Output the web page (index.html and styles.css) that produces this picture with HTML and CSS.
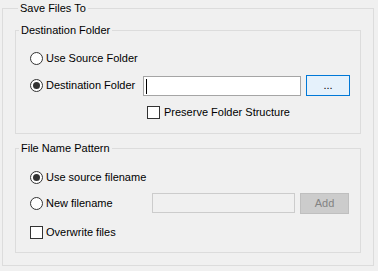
FILE: index.html
```html
<!DOCTYPE html>
<html>
<head>
<meta charset="utf-8">
<link rel="stylesheet" href="styles.css">
</head>
<body>
<fieldset class="group group-outer">
  <legend class="caption">Save Files To</legend>
  <fieldset class="group group-inner group-dest">
    <legend class="caption">Destination Folder</legend>
    <div class="row row-a">
      <label class="option"><span class="radio"></span><span class="text">Use Source Folder</span></label>
    </div>
    <div class="row row-b">
      <label class="option option-dest"><span class="radio checked"></span><span class="text">Destination Folder</span></label>
      <div class="textbox textbox-dest"><span class="caret"></span></div>
      <button class="btn btn-browse">...</button>
    </div>
    <div class="row row-c">
      <label class="option option-indent"><span class="checkbox"></span><span class="text text-check">Preserve Folder Structure</span></label>
    </div>
  </fieldset>
  <fieldset class="group group-inner group-name">
    <legend class="caption">File Name Pattern</legend>
    <div class="row row-a2">
      <label class="option"><span class="radio checked"></span><span class="text">Use source filename</span></label>
    </div>
    <div class="row row-b2">
      <label class="option option-new"><span class="radio"></span><span class="text">New filename</span></label>
      <div class="textbox textbox-new disabled"></div>
      <button class="btn btn-add" disabled>Add</button>
    </div>
    <div class="row row-c2">
      <label class="option"><span class="checkbox"></span><span class="text">Overwrite files</span></label>
    </div>
  </fieldset>
</fieldset>
</body>
</html>
```

FILE: styles.css
```css
html, body {
  margin: 0;
  padding: 0;
  background: #f0f0f0;
}
body {
  font-family: "Liberation Sans", Arial, sans-serif;
  font-size: 11px;
  line-height: 13px;
  color: #000;
}
.group {
  margin: 0;
  min-inline-size: 0;
  border: 1px solid #dcdcdc;
  box-sizing: border-box;
}
.caption {
  padding: 0 2px;
  margin-left: 3px;
  line-height: 13px;
  height: 13px;
}
.group-outer {
  margin: 2px 0 0 2px;
  width: 372px;
  padding: 9px 0 12px 12px;
}
.group-inner {
  width: 346px;
  padding: 0;
}
.group-dest {
  padding-bottom: 14px;
}
.group-name {
  margin-top: 8px;
  padding-bottom: 13px;
}
.row {
  display: flex;
  align-items: center;
}
.row-a { margin-top: 11px; height: 20px; }
.row-b { margin-top: 7px; height: 21px; align-items: flex-start; }
.row-c { margin-top: 10px; height: 13px; }
.row-a2 { margin-top: 12px; height: 20px; }
.row-b2 { margin-top: 6px; height: 21px; align-items: flex-start; }
.row-c2 { margin-top: 12px; height: 13px; }

.option {
  display: flex;
  align-items: center;
  margin-left: 14px;
  white-space: nowrap;
}
.row-b .option, .row-b2 .option {
  height: 21px;
}
.option-dest { width: 113px; }
.option-new { width: 122px; }
.option-indent { margin-left: 131px; }
.text {
  margin-left: 3px;
}
.text-check {
  margin-left: 4px;
}
.radio {
  width: 13px;
  height: 13px;
  box-sizing: border-box;
  border: 1px solid #333;
  border-radius: 50%;
  background: #fff;
  display: flex;
  align-items: center;
  justify-content: center;
  flex: none;
}
.radio.checked::after {
  content: "";
  width: 7px;
  height: 7px;
  border-radius: 50%;
  background: #333;
}
.checkbox {
  width: 13px;
  height: 13px;
  box-sizing: border-box;
  border: 1px solid #333;
  background: #fff;
  flex: none;
}
.textbox {
  box-sizing: border-box;
  height: 20px;
  border: 1px solid #a5a5a5;
  background: #fff;
  flex: none;
  position: relative;
}
.textbox-dest {
  width: 158px;
  margin-top: 1px;
}
.textbox-new {
  width: 143px;
}
.textbox.disabled {
  background: #f0f0f0;
  border-color: #cccccc;
}
.caret {
  position: absolute;
  left: 2px;
  top: 2px;
  width: 1px;
  height: 15px;
  background: #000;
}
.btn {
  box-sizing: border-box;
  height: 21px;
  margin-left: 5px;
  padding: 0;
  font: inherit;
  line-height: 13px;
  flex: none;
}
.btn-browse {
  width: 44px;
  border: 1px solid #0078d7;
  background: #e5f1fb;
  color: #000;
}
.btn-add {
  width: 49px;
  border: 1px solid #bfbfbf;
  background: #cccccc;
  color: #838383;
}
```
